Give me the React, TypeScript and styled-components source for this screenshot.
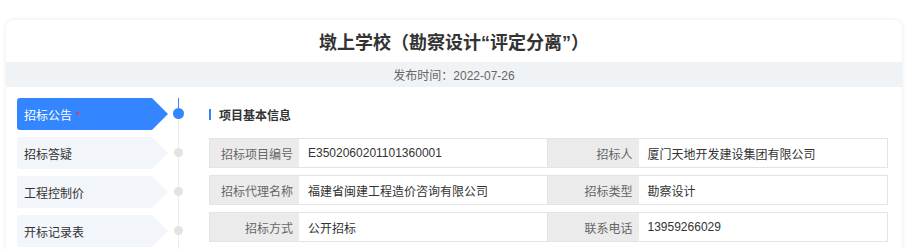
import React from "react";
import styled, { createGlobalStyle, css } from "styled-components";

const GlobalStyle = createGlobalStyle`
  html, body {
    margin: 0;
    padding: 0;
    background: #fff;
    font-family: "Liberation Sans", "Noto Sans CJK SC", sans-serif;
    color: #333;
  }
  * { box-sizing: border-box; }
`;

const Page = styled.div`
  padding: 20px 7px 0 6px;
`;

const Card = styled.div`
  background: #fff;
  border-radius: 8px;
  box-shadow: 0 0 5px rgba(0, 0, 0, 0.09);
  overflow: hidden;
  min-height: 240px;
`;

const Title = styled.h1`
  margin: 0;
  height: 42px;
  display: flex;
  align-items: center;
  justify-content: center;
  font-size: 18px;
  font-weight: bold;
  color: #333;
`;

const PublishBar = styled.div`
  height: 25px;
  display: flex;
  align-items: center;
  justify-content: center;
  background: #eff3f6;
  font-size: 12px;
  color: #666;
`;

const Content = styled.div`
  display: flex;
  padding: 11px 14px 0 11px;
`;

const Nav = styled.ul`
  list-style: none;
  margin: 0;
  padding: 0;
  flex: 0 0 auto;
`;

const NavRow = styled.li`
  display: flex;
  height: 39px;
`;

const Tab = styled.div<{ $active?: boolean }>`
  width: 151px;
  height: 32px;
  display: flex;
  align-items: center;
  padding-left: 7px;
  font-size: 12px;
  border-radius: 3px 0 0 3px;
  clip-path: polygon(0 0, 135px 0, 151px 50%, 135px 100%, 0 100%);
  background: ${({ $active }) => ($active ? "#3386ff" : "#f2f5fa")};
  color: ${({ $active }) => ($active ? "#fff" : "#333")};
`;

const Required = styled.span`
  color: #f0314a;
  font-size: 11px;
  margin-left: 4px;
  margin-top: 2px;
`;

const StepCell = styled.div<{ $active?: boolean }>`
  position: relative;
  width: 22px;
  &::before {
    content: "";
    position: absolute;
    left: 10px;
    top: 0;
    bottom: 0;
    width: 1px;
    background: #ececec;
  }
  ${({ $active }) =>
    $active &&
    css`
      &::after {
        content: "";
        position: absolute;
        left: 10px;
        top: 0;
        height: 16px;
        width: 1px;
        background: #3386ff;
      }
    `}
`;

const Dot = styled.span<{ $active?: boolean }>`
  position: absolute;
  z-index: 1;
  left: ${({ $active }) => ($active ? "5px" : "6px")};
  top: ${({ $active }) => ($active ? "10px" : "11px")};
  width: ${({ $active }) => ($active ? "11px" : "9px")};
  height: ${({ $active }) => ($active ? "11px" : "9px")};
  border-radius: 50%;
  background: ${({ $active }) => ($active ? "#3386ff" : "#e3e3e3")};
`;

const Main = styled.div`
  flex: 1;
  margin-left: 19px;
`;

const SectionHeader = styled.h2`
  margin: 0 0 8px;
  height: 32px;
  display: flex;
  align-items: center;
  gap: 8px;
  font-size: 12px;
  font-weight: bold;
  color: #333;
  &::before {
    content: "";
    width: 2px;
    height: 11px;
    background: #3386ff;
  }
`;

const InfoTable = styled.div`
  display: flex;
  flex-direction: column;
  gap: 7px;
`;

const InfoRow = styled.div`
  display: grid;
  grid-template-columns: 89px 1fr 91px 1fr;
  height: 30px;
  border: 1px solid #e4e4e4;
  font-size: 12px;
`;

const Label = styled.div`
  display: flex;
  align-items: center;
  justify-content: flex-end;
  padding-right: 6px;
  background: #ebebeb;
  color: #666;
`;

const Value = styled.div`
  display: flex;
  align-items: center;
  padding-left: 9px;
  background: #fff;
  color: #333;
  border-right: 1px solid #e4e4e4;
  &:last-child {
    border-right: none;
  }
`;

const steps = [
  { name: "招标公告", active: true, required: true },
  { name: "招标答疑" },
  { name: "工程控制价" },
  { name: "开标记录表" },
];

const rows: [string, string, string, string][] = [
  ["招标项目编号", "E3502060201101360001", "招标人", "厦门天地开发建设集团有限公司"],
  ["招标代理名称", "福建省闽建工程造价咨询有限公司", "招标类型", "勘察设计"],
  ["招标方式", "公开招标", "联系电话", "13959266029"],
];

export default function App() {
  return (
    <>
      <GlobalStyle />
      <Page>
        <Card>
          <Title>墩上学校（勘察设计“评定分离”）</Title>
          <PublishBar>发布时间：2022-07-26</PublishBar>
          <Content>
            <Nav>
              {steps.map((s) => (
                <NavRow key={s.name}>
                  <Tab $active={s.active}>
                    {s.name}
                    {s.required && <Required>*</Required>}
                  </Tab>
                  <StepCell $active={s.active}>
                    <Dot $active={s.active} />
                  </StepCell>
                </NavRow>
              ))}
            </Nav>
            <Main>
              <SectionHeader>项目基本信息</SectionHeader>
              <InfoTable>
                {rows.map((r) => (
                  <InfoRow key={r[0]}>
                    <Label>{r[0]}</Label>
                    <Value>{r[1]}</Value>
                    <Label>{r[2]}</Label>
                    <Value>{r[3]}</Value>
                  </InfoRow>
                ))}
              </InfoTable>
            </Main>
          </Content>
        </Card>
      </Page>
    </>
  );
}
